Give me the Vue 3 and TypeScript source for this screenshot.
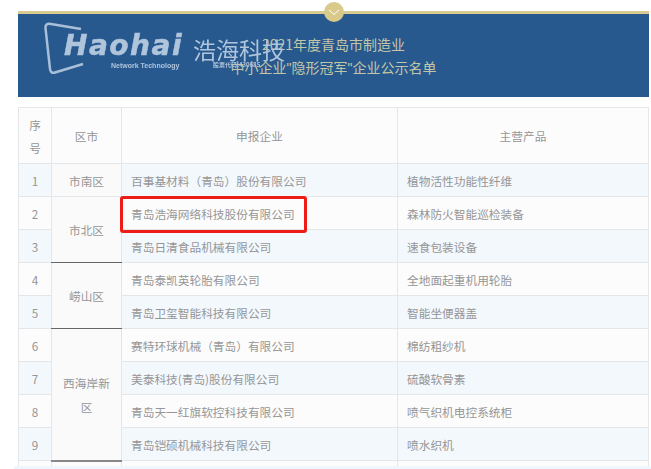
<script setup lang="ts">
interface Row { no: number; city?: string; span?: number; company: string; product: string }
const rows: Row[] = [
  { no: 1, city: '市南区', span: 1, company: '百事基材料（青岛）股份有限公司', product: '植物活性功能性纤维' },
  { no: 2, city: '市北区', span: 2, company: '青岛浩海网络科技股份有限公司', product: '森林防火智能巡检装备' },
  { no: 3, company: '青岛日清食品机械有限公司', product: '速食包装设备' },
  { no: 4, city: '崂山区', span: 2, company: '青岛泰凯英轮胎有限公司', product: '全地面起重机用轮胎' },
  { no: 5, company: '青岛卫玺智能科技有限公司', product: '智能坐便器盖' },
  { no: 6, city: '西海岸新区', span: 4, company: '赛特环球机械（青岛）有限公司', product: '棉纺粗纱机' },
  { no: 7, company: '美泰科技(青岛)股份有限公司', product: '硫酸软骨素' },
  { no: 8, company: '青岛天一红旗软控科技有限公司', product: '喷气织机电控系统柜' },
  { no: 9, company: '青岛铠硕机械科技有限公司', product: '喷水织机' },
]
</script>

<template>
  <div class="page">
    <header class="banner">
      <div class="badge">
        <svg width="12" height="7" viewBox="0 0 12 7"><path d="M1 1l5 4.5L11 1" fill="none" stroke="#fff" stroke-width="1"/></svg>
      </div>
      <p class="title">2021年度青岛市制造业</p>
      <p class="title">中小企业<span class="q">"</span>隐形冠军<span class="q">"</span>企业公示名单</p>
      <div class="logo">
        <svg class="mark" width="44" height="56" viewBox="0 0 44 56"><path d="M38 7 8 2Q2 1 2.500 6L7 47Q8 52 12 50.500L40 42" fill="none" stroke="#a9bfd8" stroke-width="2.500"/></svg>
        <span class="brand">Haohai</span>
        <span class="sub">Network Technology</span>
        <span class="cn">浩海科技</span>
        <span class="code">股票代码:430685</span>
      </div>
    </header>
    <table class="list">
      <colgroup><col class="c1"><col class="c2"><col class="c3"><col></colgroup>
      <thead>
        <tr><th>序号</th><th>区市</th><th>申报企业</th><th>主营产品</th></tr>
      </thead>
      <tbody>
        <tr v-for="r in rows" :key="r.no">
          <td class="ctr">{{ r.no }}</td>
          <td v-if="r.city" class="ctr city" :class="{ dark: r.span! > 1, last: r.no === 6 }" :rowspan="r.span">{{ r.city }}</td>
          <td><span class="txt" :class="{ mark2: r.no === 2 }">{{ r.company }}</span></td>
          <td>{{ r.product }}</td>
        </tr>
        <tr class="stub"><td></td><td></td><td></td><td></td></tr>
      </tbody>
    </table>
    <div class="foot"></div>
  </div>
</template>

<style>
html, body { margin: 0; background: #fff; overflow: hidden; }
</style>

<style scoped>
.page { width: 651px; height: 469px; position: relative; overflow: hidden; padding: 11px 2px 0 18px; box-sizing: border-box; font-family: "Noto Sans CJK SC", sans-serif; filter: blur(.4px); }
.banner { position: relative; height: 86px; box-sizing: border-box; border-top: 3px solid #d9cb8f; background: #27598f; padding-top: 19px; text-align: center; }
.title { margin: 0; height: 23px; line-height: 23px; font-size: 14px; color: #c2c6a6; }
.q { font-family: "Liberation Sans", sans-serif; }
.badge { position: absolute; left: 306px; top: -12px; width: 20px; height: 20px; border-radius: 50%; background: #d9c98a; display: flex; align-items: center; justify-content: center; }
.logo { position: absolute; inset: 0; color: #b0c5dc; text-align: left; }
.mark { position: absolute; left: 25px; top: 8px; }
.brand { position: absolute; left: 46px; top: 14px; font: italic 700 28px/36px "DejaVu Sans", sans-serif; letter-spacing: 1.500px; -webkit-text-stroke: .5px #b0c5dc; }
.sub { position: absolute; left: 93px; top: 47px; font: 700 7px/10px "Liberation Sans", sans-serif; white-space: nowrap; }
.cn { position: absolute; left: 175px; top: 20px; font-size: 23px; line-height: 30px; font-weight: 400; white-space: nowrap; }
.code { position: absolute; left: 195px; top: 47px; font-size: 6px; line-height: 8px; font-weight: 700; white-space: nowrap; }
.list { margin-top: 10px; width: 631px; table-layout: fixed; border-collapse: collapse; font-size: 11.700px; color: #969696; background: #fcfcfc; }
.c1 { width: 33px; } .c2 { width: 70px; } .c3 { width: 276px; }
th, td { border: 1px solid #e4e6ea; font-weight: 400; padding: 1px 9px 0; box-sizing: border-box; }
th { height: 56px; text-align: center; line-height: 23.500px; }
th:first-child { padding: 1px 10px 0; }
td { height: 33px; line-height: 20px; }
tbody tr:nth-child(odd) td:not(.city) { background: #f3f8fd; }
.ctr { text-align: center; padding: 1px 0 0; }
.city { background: #fafafa; line-height: 23.500px; padding: 1px 8px 0; }
.city.dark { border-bottom: 1px solid #666; }
.city.last { border-bottom: 2px solid #888; }
.txt { position: relative; display: inline-block; }
.mark2::after { content: ""; position: absolute; left: -11px; top: -8px; width: 187px; height: 37px; border: 3px solid #ee1c16; border-radius: 3px; box-sizing: border-box; }
.stub td { height: 6px; }
.foot { position: absolute; left: 14px; right: 0; bottom: 0; height: 3px; background: #f0f6fd; }
</style>
